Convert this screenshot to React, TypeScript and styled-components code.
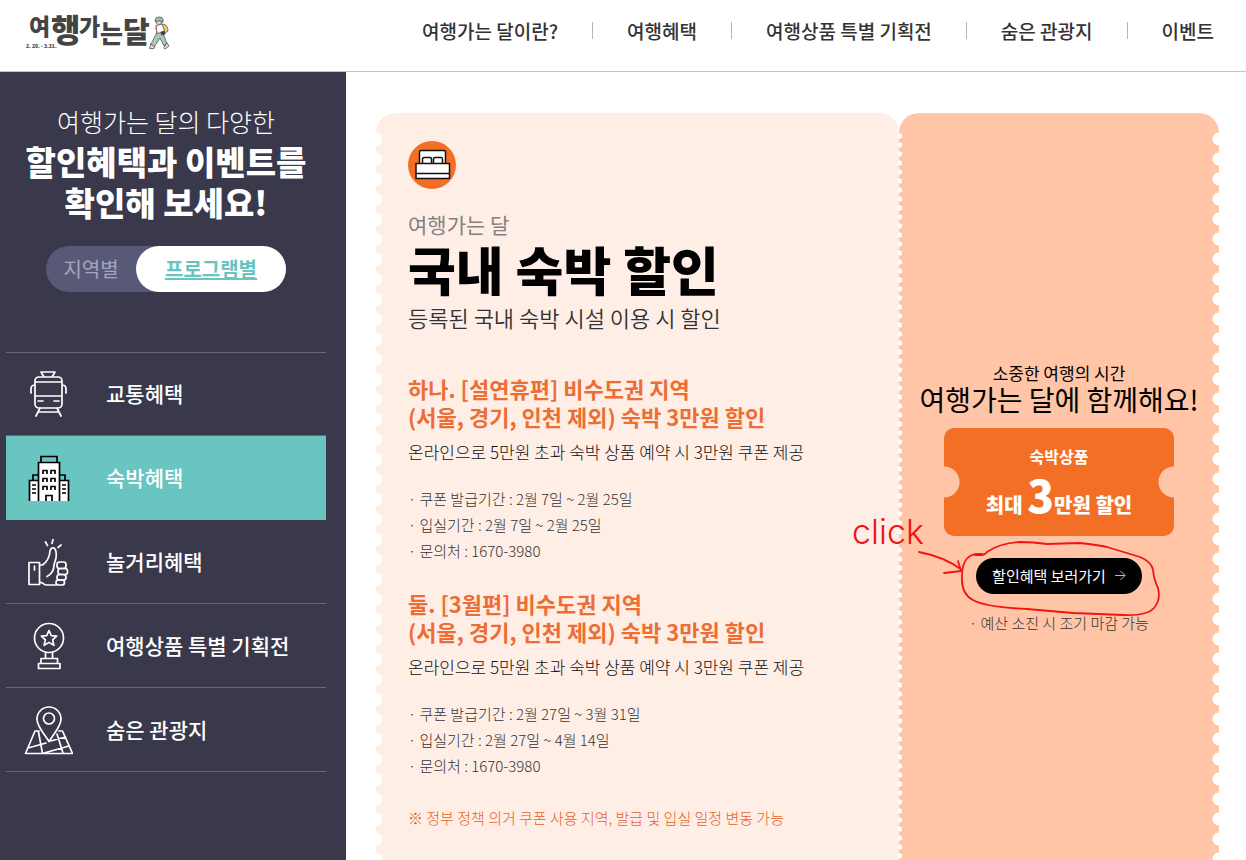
import React from 'react';
import styled, { createGlobalStyle } from 'styled-components';

const GlobalStyle = createGlobalStyle`
  *, *::before, *::after { box-sizing: border-box; }
  body {
    margin: 0;
    background: #fff;
    color: #333;
    font-family: "Noto Sans CJK KR", "Noto Sans", sans-serif;
  }
  h1, h2, h3, p, ul { margin: 0; padding: 0; }
  ul { list-style: none; }
  a { color: inherit; text-decoration: none; }
  button { font-family: inherit; border: 0; cursor: pointer; padding: 0; }
`;

const Page = styled.div`
  display: flex;
  flex-direction: column;
  min-height: 100vh;
`;

const Header = styled.header`
  display: flex;
  justify-content: space-between;
  align-items: center;
  height: 72px;
  padding: 0 32px 10px 24px;
  border-bottom: 1px solid #c4c4c8;
`;

const LogoLink = styled.a`
  display: block;
  height: 44px;
`;

const LogoMark = styled.svg`
  overflow: visible;
`;

const NavList = styled.ul`
  display: flex;
  align-items: center;
`;

const NavItem = styled.li`
  display: flex;
  align-items: center;
  font-size: 19px;
  line-height: 28px;
  font-weight: 500;
  white-space: nowrap;

  & + &::before {
    content: "";
    width: 1px;
    height: 17px;
    margin: 0 34px;
    background: #b5b5b5;
  }
`;

const Body = styled.div`
  display: flex;
  flex: 1;
`;

const Sidebar = styled.aside`
  flex: 0 0 346px;
  padding: 29px 20px 0 6px;
  background: #39394b;
  color: #fff;
`;

const SideTitle = styled.h2`
  font-size: 33px;
  line-height: 41px;
  font-weight: 900;
  text-align: center;
`;

const SideLead = styled.span`
  display: block;
  font-size: 25px;
  line-height: 40px;
  font-weight: 300;
`;

const Toggle = styled.div`
  display: flex;
  width: 240px;
  height: 46px;
  margin: 23px auto 60px;
  border-radius: 23px;
  background: #585977;
`;

const ToggleButton = styled.button<{ $active?: boolean }>`
  flex: ${p => (p.$active ? '0 0 150px' : '1')};
  padding-bottom: 2px;
  border-radius: 23px;
  background: ${p => (p.$active ? '#fff' : 'transparent')};
  color: ${p => (p.$active ? '#67c5bf' : '#a5a6bd')};
  font-size: 20px;
  font-weight: ${p => (p.$active ? 700 : 400)};
  text-decoration: ${p => (p.$active ? 'underline' : 'none')};
`;

const MenuList = styled.ul`
  border-top: 1px solid #686879;
`;

const MenuLink = styled.a<{ $active?: boolean }>`
  display: flex;
  align-items: center;
  gap: 33px;
  height: 84px;
  padding-left: 18px;
  border-bottom: 1px solid ${p => (p.$active ? '#67c5bf' : '#686879')};
  background: ${p => (p.$active ? '#69c5c0' : 'transparent')};
  font-size: 21px;
  font-weight: 500;

  li:first-child > & { height: 83px; }
`;

const MenuLabel = styled.span`
  padding-bottom: 2px;
`;

const MenuIcon = styled.svg`
  width: 49px;
  height: 52px;
  fill: none;
  stroke: #fff;
  stroke-width: 1.7;
  stroke-linejoin: round;
  stroke-linecap: round;
`;

const Main = styled.main`
  display: flex;
  flex: 1;
  padding: 41px 27px 0 30px;
`;

const Benefit = styled.section`
  position: relative;
  flex: 1;
  padding: 28px 32px 29px;
  border-radius: 20px 20px 0 0;
  background: #ffeee6;

  &::before {
    content: "";
    position: absolute;
    left: 0;
    top: 16px;
    bottom: 0;
    width: 8px;
    background: radial-gradient(circle at 0 10px, #fff 6px, transparent 7px) 0 0 / 8px 20px repeat-y;
  }
`;

const BedIcon = styled.svg`
  display: block;
  width: 48px;
  height: 48px;
  margin-bottom: 20px;
`;

const Eyebrow = styled.p`
  font-size: 21px;
  line-height: 30px;
  color: #858080;
`;

const Title = styled.h1`
  font-size: 52px;
  line-height: 60px;
  font-weight: 900;
  color: #000;
`;

const Subtitle = styled.p`
  font-size: 22px;
  line-height: 36px;
  font-weight: 350;
`;

const Offer = styled.article`
  margin-top: 39px;

  & + & { margin-top: 25px; }
`;

const OfferTitle = styled.h3`
  font-size: 22px;
  line-height: 28px;
  font-weight: 700;
  color: #ec6e34;
`;

const OfferText = styled.p`
  margin: 7px 0 19px;
  font-size: 17px;
  line-height: 30px;
  font-weight: 300;
  color: #111;
`;

const Detail = styled.li`
  font-size: 15px;
  line-height: 26px;
  font-weight: 300;
`;

const Warning = styled.p`
  margin-top: 26px;
  font-size: 15px;
  line-height: 26px;
  font-weight: 300;
  color: #e8612a;
`;

const Stub = styled.aside`
  position: relative;
  flex: 0 0 320px;
  display: flex;
  flex-direction: column;
  align-items: center;
  padding-top: 249px;
  border-radius: 20px 20px 0 0;
  background: #ffc5a6;
  color: #000;

  &::before, &::after {
    content: "";
    position: absolute;
    bottom: 0;
  }
  &::before {
    left: -3px;
    top: 19px;
    width: 6px;
    background: radial-gradient(circle at 4px 4px, #fff 2px, transparent 3px) 0 0 / 6px 9px repeat-y;
  }
  &::after {
    right: 0;
    top: 16px;
    width: 8px;
    background: radial-gradient(circle at 8px 10px, #fff 6px, transparent 7px) 0 0 / 8px 20px repeat-y;
  }
`;

const StubLead = styled.p`
  font-size: 17px;
  line-height: 22px;
`;

const StubTitle = styled.p`
  font-size: 28px;
  line-height: 30px;
  white-space: nowrap;
`;

const Coupon = styled.div`
  display: flex;
  flex-direction: column;
  align-items: center;
  width: 230px;
  height: 108px;
  margin: 14px 0 22px;
  padding-top: 17px;
  border-radius: 10px;
  color: #fff;
  background:
    radial-gradient(circle at 0 50%, #ffc5a6 15px, transparent 16px) left / 50% 100% no-repeat,
    radial-gradient(circle at 100% 50%, #ffc5a6 15px, transparent 16px) right / 50% 100% no-repeat,
    #f36f26;
`;

const CouponLabel = styled.span`
  font-size: 16px;
  line-height: 22px;
  font-weight: 700;
`;

const CouponValue = styled.strong`
  font-size: 20px;
  line-height: 54px;
  font-weight: 900;
`;

const CouponNumber = styled.span`
  font-size: 44px;
`;

const ActionWrap = styled.div`
  position: relative;
`;

const ActionButton = styled.button`
  display: flex;
  align-items: center;
  justify-content: center;
  gap: 8px;
  width: 166px;
  height: 36px;
  padding-bottom: 2px;
  border-radius: 18px;
  background: #000;
  color: #fff;
  font-size: 15px;
`;

const Ink = styled.svg`
  position: absolute;
  left: -126px;
  top: -53px;
  width: 320px;
  height: 115px;
  fill: none;
  stroke: #f01414;
  stroke-width: 1.8;
  stroke-linecap: round;
  stroke-linejoin: round;
  pointer-events: none;
`;

const InkWord = styled.text`
  fill: #f01414;
  stroke: none;
  font-family: Inter, sans-serif;
  font-size: 34px;
  font-weight: 300;
`;

const LogoText = styled.text`
  fill: #444;
  font-weight: 900;
`;

const StubNote = styled.p`
  margin-top: 16px;
  font-size: 15px;
  line-height: 26px;
  font-weight: 300;
  color: #333;
`;

function Logo() {
  return (
    <LogoMark width="148" height="44" viewBox="24 8 148 44" role="img" aria-label="여행가는 달">
      <LogoText x="29" y="34" fontSize="23">여</LogoText>
      <LogoText x="51" y="41" fontSize="32">행</LogoText>
      <LogoText x="79" y="34" fontSize="23">가</LogoText>
      <LogoText x="100" y="42" fontSize="25">는</LogoText>
      <LogoText x="123" y="42" fontSize="29">달</LogoText>
      <LogoText x="26" y="47" fontSize="5">2. 20. - 3.31.</LogoText>
      <g strokeLinejoin="round" strokeLinecap="round" strokeWidth=".8" stroke="#4c5552">
        <path d="M163 23q5 1 5 7l-4 3-3-5z" fill="#f3cf69" />
        <path d="M157 24l5-1 3 8-2 3h-6z" fill="#fff" />
        <path d="M156 20q0 4 3 4l3-2v-3z" fill="#f6c8b5" />
        <path d="M155 20q0-4 4-4 5 0 4 5l-3-1z" fill="#9fbdb4" />
        <path d="M157 32h6l4 11-3 2-4-8-6 9-3-2z" fill="#a9c8bc" />
        <path d="M151 43l4 3-1 1.500h-4zM167 42l2 3-4 3-1-1z" fill="#f1d9ad" />
        <path d="M156 24l-1 4 3 3" fill="none" stroke="#e08883" />
        <path d="M161 31l3-1 1 3-3 1z" fill="#333" />
      </g>
    </LogoMark>
  );
}

function TramIcon() {
  return (
    <MenuIcon viewBox="24 368 49 52" aria-hidden="true">
      <path d="M41 372h14l-3 5h-8zM39 377h19a4 4 0 0 1 4 4v23a4 4 0 0 1-4 4H39a4 4 0 0 1-4-4v-23a4 4 0 0 1 4-4zM35 382h27M35 396h27M38 401h5M54 401h5M35 385q-4 0-4 4v4M62 385q4 0 4 4v4M40 408l-4 8M57 408l4 8M38 412h21" />
    </MenuIcon>
  );
}

function HotelIcon() {
  return (
    <MenuIcon viewBox="24 452 49 52" aria-hidden="true">
      <g fill="#fff" stroke="#000" strokeLinecap="butt" strokeLinejoin="miter">
        <path d="M29.500 501v-20.500H39V501M59 501v-20.500h9.500V501" />
        <path d="M33 480v-5h6M65 480v-5h-6M41 462v-5.500h16v5.500" fill="none" />
        <path d="M38.500 501v-38.500h21V501" />
        <path d="M46 501v-5.500h6v5.500M43 474v-3.500h4v3.500M51 474v-3.500h4v3.500M43 482v-3.500h4v3.500M51 482v-3.500h4v3.500M43 490v-3.500h4v3.500M51 490v-3.500h4v3.500M32 485h4M32 489h4M32 493h4M62 485h4M62 489h4M62 493h4" />
      </g>
    </MenuIcon>
  );
}

function ThumbIcon() {
  return (
    <MenuIcon viewBox="24 536 49 52" aria-hidden="true">
      <path d="M29 562.500h10.500v22H29zM34.500 566v4M39.500 565h3q7-5 7.500-14 1-4 4-3 3 2 2 10l-2 7q0 8-7 11.500M39.500 582l3 1q2 2 4 2h9M45.500 542l2 3.500M53 539.500l-1 4M61 545l-3 2.500" />
      <rect x="57" y="562" width="9" height="6.500" rx="2.500" />
      <rect x="58" y="568.500" width="9.500" height="6" rx="2.500" />
      <rect x="57" y="574.500" width="9" height="5.500" rx="2.500" />
      <rect x="56" y="580" width="8.500" height="5" rx="2.500" />
    </MenuIcon>
  );
}

function TrophyIcon() {
  return (
    <MenuIcon viewBox="24 620 49 52" aria-hidden="true">
      <circle cx="49" cy="638" r="14.500" />
      <path d="M49 630.500l2.300 5.100 5.400.5-4.100 3.700 1.300 5.600-4.900-3-4.900 3 1.300-5.600-4.100-3.700 5.400-.5zM45.500 652.500v6M52.500 652.500v6M41 658.500h16.500v5H41zM38.500 663.500h21.500v5H38.500z" />
    </MenuIcon>
  );
}

function MapIcon() {
  return (
    <MenuIcon viewBox="24 704 49 52" aria-hidden="true">
      <path d="M49 741.500C44 733 37 727 37 719a12 12 0 0 1 24 0c0 8-7 14-12 22.500z" />
      <circle cx="49" cy="718.500" r="5.500" />
      <path d="M39 731h-4l-9.500 22.500h47L62.500 731H59M38.500 732l4 21.500M28 748l18-5M50.500 741l15-4M44 753l25-7M57 734l6 19" />
    </MenuIcon>
  );
}

const NAV = ['여행가는 달이란?', '여행혜택', '여행상품 특별 기획전', '숨은 관광지', '이벤트'];

const MENU = [
  { label: '교통혜택', Icon: TramIcon },
  { label: '숙박혜택', Icon: HotelIcon, active: true },
  { label: '놀거리혜택', Icon: ThumbIcon },
  { label: '여행상품 특별 기획전', Icon: TrophyIcon },
  { label: '숨은 관광지', Icon: MapIcon },
];

const OFFERS = [
  {
    title: '하나. [설연휴편] 비수도권 지역',
    details: ['· 쿠폰 발급기간 : 2월 7일 ~ 2월 25일', '· 입실기간 : 2월 7일 ~ 2월 25일', '· 문의처 : 1670-3980'],
  },
  {
    title: '둘. [3월편] 비수도권 지역',
    details: ['· 쿠폰 발급기간 : 2월 27일 ~ 3월 31일', '· 입실기간 : 2월 27일 ~ 4월 14일', '· 문의처 : 1670-3980'],
  },
];

export default function App() {
  return (
    <Page>
      <GlobalStyle />
      <Header>
        <LogoLink href="#"><Logo /></LogoLink>
        <nav>
          <NavList>
            {NAV.map(label => (
              <NavItem key={label}><a href="#">{label}</a></NavItem>
            ))}
          </NavList>
        </nav>
      </Header>
      <Body>
        <Sidebar>
          <SideTitle>
            <SideLead>여행가는 달의 다양한</SideLead>
            할인혜택과 이벤트를<br />확인해 보세요!
          </SideTitle>
          <Toggle>
            <ToggleButton type="button">지역별</ToggleButton>
            <ToggleButton type="button" $active>프로그램별</ToggleButton>
          </Toggle>
          <MenuList>
            {MENU.map(({ label, Icon, active }) => (
              <li key={label}>
                <MenuLink href="#" $active={active}>
                  <Icon />
                  <MenuLabel>{label}</MenuLabel>
                </MenuLink>
              </li>
            ))}
          </MenuList>
        </Sidebar>
        <Main>
          <Benefit>
            <BedIcon viewBox="0 0 48 48" aria-hidden="true">
              <circle cx="24" cy="24" r="24" fill="#f36f26" />
              <g fill="#fff" stroke="#111" strokeWidth="1.500" strokeLinejoin="round">
                <path d="M11.500 23V11q0-1.500 1.500-1.500h23q1.500 0 1.500 1.500v12z" />
                <path d="M14.500 22.500V18q0-1.500 1.500-1.500h6q1.500 0 1.500 1.500v4.500M25.500 22.500V18q0-1.500 1.500-1.500h6q1.500 0 1.500 1.500v4.500" />
                <path d="M8 22.500h33.500V37.500H8zM8 32.500h33.500" />
              </g>
            </BedIcon>
            <Eyebrow>여행가는 달</Eyebrow>
            <Title>국내 숙박 할인</Title>
            <Subtitle>등록된 국내 숙박 시설 이용 시 할인</Subtitle>
            {OFFERS.map(offer => (
              <Offer key={offer.title}>
                <OfferTitle>{offer.title}<br />(서울, 경기, 인천 제외) 숙박 3만원 할인</OfferTitle>
                <OfferText>온라인으로 5만원 초과 숙박 상품 예약 시 3만원 쿠폰 제공</OfferText>
                <ul>
                  {offer.details.map(detail => <Detail key={detail}>{detail}</Detail>)}
                </ul>
              </Offer>
            ))}
            <Warning>※ 정부 정책 의거 쿠폰 사용 지역, 발급 및 입실 일정 변동 가능</Warning>
          </Benefit>
          <Stub>
            <StubLead>소중한 여행의 시간</StubLead>
            <StubTitle>여행가는 달에 함께해요!</StubTitle>
            <Coupon>
              <CouponLabel>숙박상품</CouponLabel>
              <CouponValue>최대 <CouponNumber>3</CouponNumber>만원 할인</CouponValue>
            </Coupon>
            <ActionWrap>
              <ActionButton type="button">
                할인혜택 보러가기
                <svg width="12" height="12" viewBox="0 0 12 12" fill="none" stroke="#bbb" aria-hidden="true">
                  <path d="M1 6.500h10M6.500 2L11 6.500 6.500 11" />
                </svg>
              </ActionButton>
              <Ink viewBox="850 505 320 115">
                <InkWord x="852" y="544">click</InkWord>
                <path d="M919 552Q945 557 962 570M958 561L961 571 944 573" />
                <path d="M975 555Q985 556 987 552 1000 543 1020 542 1033 542 1047 544L1080 543Q1098 545 1107 547L1140 557Q1152 562 1153 570 1154 580 1158 588 1161 600 1154 608 1147 616 1123 615L1073 613 1027 609Q985 607 973 600 961 594 962 576 962 552 982 554" />
              </Ink>
            </ActionWrap>
            <StubNote>· 예산 소진 시 조기 마감 가능</StubNote>
          </Stub>
        </Main>
      </Body>
    </Page>
  );
}
